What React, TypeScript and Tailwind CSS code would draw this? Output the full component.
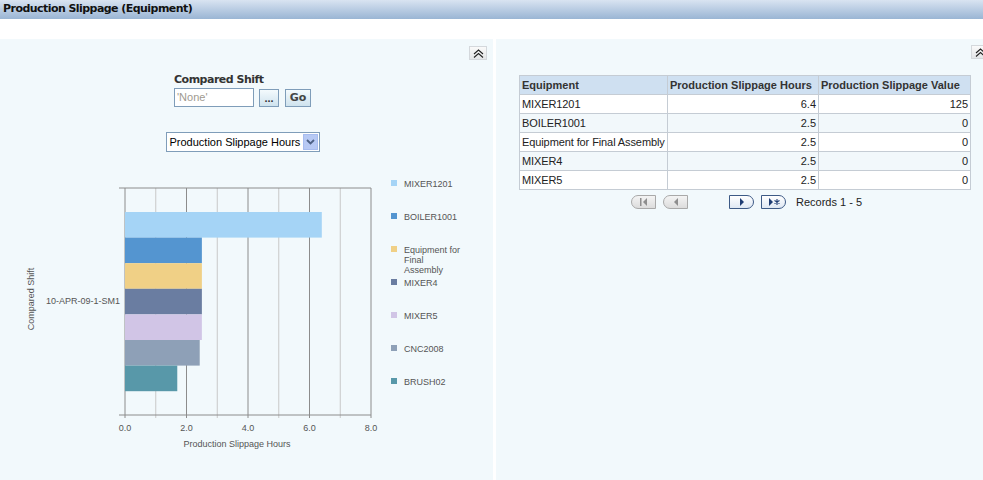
import React from "react";

const bars = [
  { name: "MIXER1201", value: 6.4, color: "#a5d4f6" },
  { name: "BOILER1001", value: 2.5, color: "#5495d0" },
  { name: "Equipment for Final Assembly", value: 2.5, color: "#f0d086" },
  { name: "MIXER4", value: 2.5, color: "#6a7da1" },
  { name: "MIXER5", value: 2.5, color: "#d1c5e6" },
  { name: "CNC2008", value: 2.43, color: "#8ea0b7" },
  { name: "BRUSH02", value: 1.7, color: "#5898a9" },
];

const rows = [
  ["MIXER1201", "6.4", "125"],
  ["BOILER1001", "2.5", "0"],
  ["Equipment for Final Assembly", "2.5", "0"],
  ["MIXER4", "2.5", "0"],
  ["MIXER5", "2.5", "0"],
];

function CollapseButton() {
  return (
    <div className="w-[18px] h-[14px] border border-[#d4d8dc] bg-gradient-to-b from-[#fafafa] to-[#e4e6e8] grid place-items-center">
      <svg width="11" height="9" viewBox="0 0 11 9">
        <path d="M1 5 L5.5 1 L10 5 M1 8.5 L5.5 4.5 L10 8.5" fill="none" stroke="#222" strokeWidth="1.1" />
      </svg>
    </div>
  );
}

function Chart() {
  const x0 = 125;
  const sx = 30.75;
  const top = 189;
  const bottom = 416;
  const barTop = 213;
  const bh = 25.6;
  return (
    <svg width="493" height="290" viewBox="0 170 493 290" className="block">
      {[1, 3, 5, 7].map((v) => (
        <line key={v} x1={x0 + v * sx} y1={top} x2={x0 + v * sx} y2={bottom + 3} stroke="#c8c8c8" strokeWidth="1" />
      ))}
      {[2, 4, 6].map((v) => (
        <line key={v} x1={x0 + v * sx} y1={top} x2={x0 + v * sx} y2={bottom + 3} stroke="#8c8c8c" strokeWidth="1" />
      ))}
      <line x1={x0} y1={top} x2={x0 + 8 * sx} y2={top} stroke="#8c8c8c" strokeWidth="1" />
      <line x1={x0 + 8 * sx} y1={top} x2={x0 + 8 * sx} y2={bottom + 3} stroke="#8c8c8c" strokeWidth="1" />
      <line x1={119} y1={top} x2={x0} y2={top} stroke="#8c8c8c" strokeWidth="1" />
      <line x1={119} y1={bottom} x2={x0 + 8 * sx} y2={bottom} stroke="#8c8c8c" strokeWidth="1" />
      <line x1={x0} y1={top} x2={x0} y2={bottom + 3} stroke="#8c8c8c" strokeWidth="1" />
      {bars.map((b, i) => (
        <rect key={b.name} x={x0} y={barTop + i * bh} width={b.value * sx} height={bh} fill={b.color} />
      ))}
      {[0, 2, 4, 6, 8].map((v) => (
        <text key={v} x={x0 + v * sx} y={432} fontSize="9" fill="#555" textAnchor="middle" fontFamily="Liberation Sans, Arial, sans-serif">
          {v.toFixed(1)}
        </text>
      ))}
      <text x={237} y={448} fontSize="9" fill="#555" textAnchor="middle" fontFamily="Liberation Sans, Arial, sans-serif">
        Production Slippage Hours
      </text>
      <text x={120} y={305} fontSize="9" fill="#555" textAnchor="end" fontFamily="Liberation Sans, Arial, sans-serif">
        10-APR-09-1-SM1
      </text>
      <text
        x={34}
        y={300}
        fontSize="9"
        fill="#555"
        textAnchor="middle"
        transform="rotate(-90 34 300)"
        fontFamily="Liberation Sans, Arial, sans-serif"
      >
        Compared Shift
      </text>
      {[
        { c: bars[0].color, y: 185, l: ["MIXER1201"] },
        { c: bars[1].color, y: 218, l: ["BOILER1001"] },
        { c: bars[2].color, y: 251, l: ["Equipment for", "Final", "Assembly"] },
        { c: bars[3].color, y: 284, l: ["MIXER4"] },
        { c: bars[4].color, y: 317, l: ["MIXER5"] },
        { c: bars[5].color, y: 350, l: ["CNC2008"] },
        { c: bars[6].color, y: 383, l: ["BRUSH02"] },
      ].map((it, i) => (
        <g key={i}>
          <rect x={391} y={it.y - 4} width={6} height={6} fill={it.c} />
          {it.l.map((t, j) => (
            <text key={j} x={404} y={it.y + 3 + j * 10} fontSize="9" fill="#555" fontFamily="Liberation Sans, Arial, sans-serif">
              {t}
            </text>
          ))}
        </g>
      ))}
    </svg>
  );
}

function PageButton({ kind }: { kind: "first" | "prev" | "next" | "last" }) {
  const enabled = kind === "next" || kind === "last";
  return (
    <div
      className={
        enabled
          ? "w-[25px] h-[14px] rounded-r-full rounded-l-[3px] border border-[#3d5a86] bg-gradient-to-b from-[#ffffff] to-[#dfe8f3] flex items-center justify-center"
          : "w-[25px] h-[14px] rounded-l-full rounded-r-[3px] border border-[#a9a9a9] bg-gradient-to-b from-[#f4f4f4] to-[#dcdcdc] flex items-center justify-center"
      }
    >
      <svg width="14" height="10" viewBox="0 0 14 10">
        {kind === "first" && (
          <>
            <rect x="3" y="1" width="1.5" height="8" fill="#8e8e8e" />
            <path d="M10 1 L6 5 L10 9 Z" fill="#8e8e8e" />
          </>
        )}
        {kind === "prev" && <path d="M9 1 L5 5 L9 9 Z" fill="#8e8e8e" />}
        {kind === "next" && <path d="M5 1 L9 5 L5 9 Z" fill="#1f3d73" />}
        {kind === "last" && (
          <>
            <path d="M2 1 L6 5 L2 9 Z" fill="#1f3d73" />
            <path d="M10 2 V8 M7.5 3.5 L12.5 6.5 M12.5 3.5 L7.5 6.5" stroke="#1f3d73" strokeWidth="1.1" />
          </>
        )}
      </svg>
    </div>
  );
}

export default function App() {
  return (
    <div className="w-[983px] h-[480px] overflow-hidden bg-white flex flex-col font-['Liberation_Sans',Arial,sans-serif]">
      <div className="h-[19px] shrink-0 bg-gradient-to-b from-[#d9e4f1] to-[#9ab5d4] flex items-center px-[3px]">
        <span className="font-['DejaVu_Sans',Tahoma,sans-serif] font-bold text-[11px] text-[#111] tracking-[-0.55px] whitespace-nowrap">
          Production Slippage (Equipment)
        </span>
      </div>
      <div className="h-[20px] shrink-0 bg-white" />
      <div className="flex-1 flex gap-[3px]">
        {/* left panel */}
        <div className="relative w-[493px] shrink-0 bg-[#f2f9fc] flex flex-col items-center pr-[8px]">
          <div className="absolute top-[7px] right-[6px]">
            <CollapseButton />
          </div>
          <div className="mt-[34px] flex flex-col">
            <div className="font-['DejaVu_Sans',Tahoma,sans-serif] font-bold text-[11px] text-[#333] leading-[14px] tracking-[-0.5px] whitespace-nowrap">
              Compared Shift
            </div>
            <div className="flex items-center gap-[5px] mt-[1px]">
              <div className="w-[80px] h-[19px] border border-[#7f9db9] bg-white px-[2px] flex items-center text-[11px] text-[#a09a90]">
                'None'
              </div>
              <div className="w-[20px] h-[18px] mt-[1px] border border-[#7f9db9] bg-gradient-to-b from-[#f4fafd] to-[#cfe3ee] grid place-items-center text-[11px] font-bold text-[#333] leading-none">
                ...
              </div>
              <div className="ml-[1px] w-[26px] h-[18px] border border-[#7f9db9] bg-gradient-to-b from-[#f4fafd] to-[#cfe3ee] grid place-items-center text-[11px] font-bold text-[#444] font-['DejaVu_Sans',Tahoma,sans-serif]">
                Go
              </div>
            </div>
          </div>
          <div className="mt-[25px] w-[154px] h-[20px] border border-[#7f9db9] bg-white flex items-center justify-between pl-[3px] pr-[1px]">
            <span className="text-[11px] text-black whitespace-nowrap">Production Slippage Hours</span>
            <div className="w-[15px] h-[16px] bg-[#b7c9f4] border border-[#a7bcef] grid place-items-center shrink-0">
              <svg width="9" height="6" viewBox="0 0 9 6">
                <path d="M1 1 L4.5 4.5 L8 1" fill="none" stroke="#4d6185" strokeWidth="1.8" />
              </svg>
            </div>
          </div>
          <div className="mt-[17px] self-start">
            <Chart />
          </div>
        </div>
        {/* right panel */}
        <div className="relative flex-1 bg-[#f2f9fc] pl-[23px] pt-[36px]">
          <div className="absolute top-[6px] right-[-6px]">
            <CollapseButton />
          </div>
          <table className="table-fixed w-[451px] border-collapse text-[11px] text-[#222] whitespace-nowrap">
            <colgroup>
              <col className="w-[148px]" />
              <col className="w-[151px]" />
              <col className="w-[152px]" />
            </colgroup>
            <thead>
              <tr className="bg-[#cfe0f1] h-[19px]">
                <th className="border border-[#c5ccd4] text-left px-[2px] font-bold text-[#333] text-[11px]">
                  Equipment
                </th>
                <th className="border border-[#c5ccd4] text-left px-[2px] font-bold text-[#333] text-[11px]">
                  Production Slippage Hours
                </th>
                <th className="border border-[#c5ccd4] text-left px-[2px] font-bold text-[#333] text-[11px]">
                  Production Slippage Value
                </th>
              </tr>
            </thead>
            <tbody>
              {rows.map((r, i) => (
                <tr key={r[0]} className={i % 2 === 0 ? "bg-white h-[19px]" : "bg-[#f2f8fb] h-[19px]"}>
                  <td className="border border-[#c5ccd4] px-[2px] tracking-[-0.1px]">{r[0]}</td>
                  <td className="border border-[#c5ccd4] px-[2px] text-right">{r[1]}</td>
                  <td className="border border-[#c5ccd4] px-[2px] text-right">{r[2]}</td>
                </tr>
              ))}
            </tbody>
          </table>
          <div className="flex items-center mt-[4px] ml-[112px]">
            <PageButton kind="first" />
            <div className="ml-[7px]">
              <PageButton kind="prev" />
            </div>
            <div className="ml-[41px]">
              <PageButton kind="next" />
            </div>
            <div className="ml-[7px]">
              <PageButton kind="last" />
            </div>
            <span className="ml-[10px] text-[11px] text-[#222]">Records 1 - 5</span>
          </div>
        </div>
      </div>
    </div>
  );
}
